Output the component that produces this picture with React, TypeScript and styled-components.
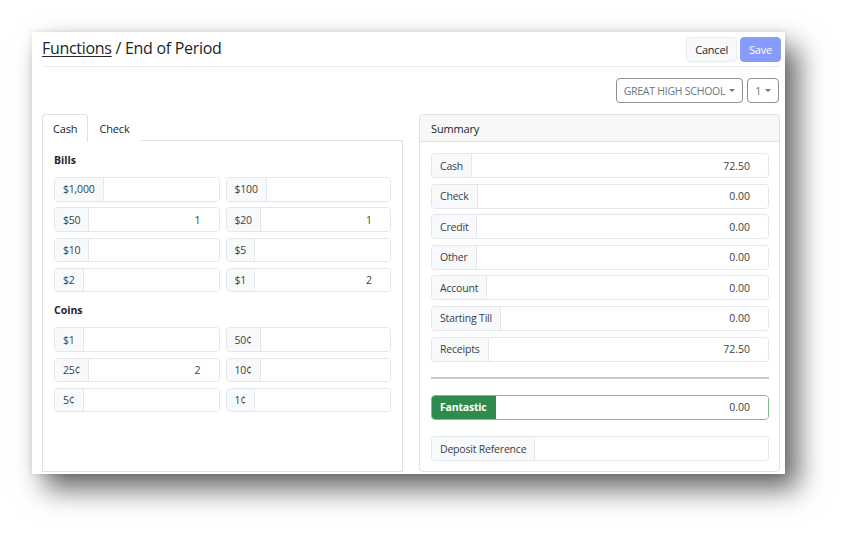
import React from 'react';
import styled, { createGlobalStyle } from 'styled-components';

const Global = createGlobalStyle`
  html, body { margin: 0; padding: 0; background: #fff; }
  body { font-family: "Open Sans", "Noto Sans", sans-serif; color: #212529; }
  * { box-sizing: border-box; }
`;

const Stage = styled.div`
  width: 850px;
  height: 540px;
  padding: 32px 0 0 32px;
  overflow: hidden;
`;

const Window = styled.div`
  width: 753px;
  height: 442px;
  background: #fff;
  box-shadow: 13px 15px 26px rgba(0, 0, 0, 0.6), 0 0 7px rgba(0, 0, 0, 0.12);
  padding: 0 4px 0 10px;
  display: flex;
  flex-direction: column;
`;

const Header = styled.div`
  display: flex;
  align-items: center;
  justify-content: space-between;
  height: 35px;
  padding: 5px 0 4px;
  border-bottom: 1px solid #e9ecef;
`;

const Title = styled.h1`
  margin: 0 0 4px;
  font-size: 16px;
  letter-spacing: -0.3px;
  font-weight: 400;
  line-height: 18px;
  color: #212529;
`;

const Crumb = styled.a`
  color: #212529;
  text-decoration: underline;
  text-underline-offset: 2px;
`;

const Actions = styled.div`
  display: flex;
  gap: 3px;
`;

const Btn = styled.button<{ $primary?: boolean }>`
  height: 25px;
  padding: 0 8px;
  font: inherit;
  font-size: 11px;
  letter-spacing: -0.2px;
  border-radius: 4px;
  border: 1px solid ${(p) => (p.$primary ? '#879bfa' : '#e9ecef')};
  background: ${(p) => (p.$primary ? '#879bfa' : '#f8f9fa')};
  color: ${(p) => (p.$primary ? '#fff' : '#212529')};
`;

const Toolbar = styled.div`
  display: flex;
  justify-content: flex-end;
  gap: 4px;
  margin: 11px 2px 0 0;
`;

const Drop = styled.button`
  height: 25px;
  padding: 0 7px;
  font: inherit;
  font-size: 10.5px;
  letter-spacing: -0.25px;
  color: #6c757d;
  background: #fff;
  border: 1px solid #8a9096;
  border-radius: 4px;
  display: flex;
  align-items: center;
  gap: 4px;
  &::after {
    content: '';
    border-top: 3.5px solid #6c757d;
    border-left: 3px solid transparent;
    border-right: 3px solid transparent;
  }
`;

const Columns = styled.div`
  display: grid;
  grid-template-columns: 361px 361px;
  gap: 16px;
  margin-top: 11px;
  height: 358px;
`;

const LeftCol = styled.div`
  display: flex;
  flex-direction: column;
`;

const Tabs = styled.div`
  display: flex;
  height: 27px;
  border-bottom: 1px solid #dee2e6;
`;

const Tab = styled.div<{ $active?: boolean }>`
  padding: 0 10px;
  display: flex;
  align-items: center;
  font-size: 11px;
  letter-spacing: -0.15px;
  color: #212529;
  border: 1px solid ${(p) => (p.$active ? '#dee2e6' : 'transparent')};
  border-bottom: none;
  border-radius: 4px 4px 0 0;
  background: #fff;
  margin-bottom: -1px;
  height: 28px;
`;

const TabPanel = styled.div`
  flex: 1;
  border: 1px solid #dee2e6;
  border-top: none;
  padding: 11px 11px;
`;

const SectionLabel = styled.div<{ $top?: number }>`
  font-size: 10.5px;
  font-weight: 700;
  line-height: 16px;
  margin: ${(p) => p.$top ?? 0}px 0 9px 0;
`;

const Grid = styled.div`
  display: grid;
  grid-template-columns: 1fr 1fr;
  column-gap: 6px;
  row-gap: 5.8px;
`;

const Group = styled.div<{ $h?: number; $success?: boolean }>`
  display: flex;
  height: ${(p) => p.$h ?? 24.5}px;
  border: 1px solid ${(p) => (p.$success ? '#7dbb90' : '#e3e6ea')};
  border-radius: 4px;
  overflow: hidden;
  background: #fff;
`;

const Addon = styled.span<{ $success?: boolean }>`
  display: flex;
  align-items: center;
  padding: 0 8px;
  font-size: 10.5px;
  letter-spacing: -0.2px;
  white-space: nowrap;
  background: ${(p) => (p.$success ? '#2f8a4e' : '#f8f9fa')};
  color: ${(p) => (p.$success ? '#fff' : '#3a3f44')};
  font-weight: ${(p) => (p.$success ? 700 : 400)};
  border-right: 1px solid ${(p) => (p.$success ? '#2f8a4e' : '#e3e6ea')};
`;

const Field = styled.input`
  flex: 1;
  min-width: 0;
  border: none;
  outline: none;
  font: inherit;
  font-size: 10.5px;
  color: #3a3f44;
  text-align: right;
  padding: 0 18px 0 8px;
  background: #fff;
`;

const Card = styled.div`
  border: 1px solid #dee2e6;
  border-radius: 4px;
  display: flex;
  flex-direction: column;
`;

const CardHeader = styled.div`
  height: 27px;
  background: #f7f7f7;
  border-bottom: 1px solid #dee2e6;
  display: flex;
  align-items: center;
  padding: 0 11px;
  font-size: 11px;
  letter-spacing: -0.15px;
  border-radius: 4px 4px 0 0;
`;

const CardBody = styled.div`
  padding: 11px 10px 0 11px;
  display: flex;
  flex-direction: column;
  gap: 5.6px;
`;

const Rule = styled.hr`
  border: none;
  border-top: 2px solid #c9c9c9;
  margin: 10px 0;
  height: 0;
`;

const Spacer = styled.div<{ $h: number }>`
  height: ${(p) => p.$h}px;
`;

const bills: [string, string][] = [
  ['$1,000', ''],
  ['$100', ''],
  ['$50', '1'],
  ['$20', '1'],
  ['$10', ''],
  ['$5', ''],
  ['$2', ''],
  ['$1', '2'],
];

const coins: [string, string][] = [
  ['$1', ''],
  ['50¢', ''],
  ['25¢', '2'],
  ['10¢', ''],
  ['5¢', ''],
  ['1¢', ''],
];

const summary: [string, string][] = [
  ['Cash', '72.50'],
  ['Check', '0.00'],
  ['Credit', '0.00'],
  ['Other', '0.00'],
  ['Account', '0.00'],
  ['Starting Till', '0.00'],
  ['Receipts', '72.50'],
];

export default function App() {
  return (
    <Stage>
      <Global />
      <Window>
        <Header>
          <Title>
            <Crumb>Functions</Crumb> / End of Period
          </Title>
          <Actions>
            <Btn>Cancel</Btn>
            <Btn $primary>Save</Btn>
          </Actions>
        </Header>
        <Toolbar>
          <Drop>GREAT HIGH SCHOOL</Drop>
          <Drop>1</Drop>
        </Toolbar>
        <Columns>
          <LeftCol>
            <Tabs>
              <Tab $active>Cash</Tab>
              <Tab>Check</Tab>
            </Tabs>
            <TabPanel>
              <SectionLabel>Bills</SectionLabel>
              <Grid>
                {bills.map(([l, v]) => (
                  <Group key={l + 'b'}>
                    <Addon>{l}</Addon>
                    <Field readOnly value={v} />
                  </Group>
                ))}
              </Grid>
              <SectionLabel $top={10}>Coins</SectionLabel>
              <Grid>
                {coins.map(([l, v]) => (
                  <Group key={l + 'c'}>
                    <Addon>{l}</Addon>
                    <Field readOnly value={v} />
                  </Group>
                ))}
              </Grid>
            </TabPanel>
          </LeftCol>
          <Card>
            <CardHeader>Summary</CardHeader>
            <CardBody>
              {summary.map(([l, v]) => (
                <Group key={l} $h={25}>
                  <Addon>{l}</Addon>
                  <Field readOnly value={v} />
                </Group>
              ))}
              <Rule />
              <Group $h={25} $success>
                <Addon $success>Fantastic</Addon>
                <Field readOnly value="0.00" />
              </Group>
              <Spacer $h={5.5} />
              <Group $h={25}>
                <Addon>Deposit Reference</Addon>
                <Field readOnly value="" />
              </Group>
            </CardBody>
          </Card>
        </Columns>
      </Window>
    </Stage>
  );
}
